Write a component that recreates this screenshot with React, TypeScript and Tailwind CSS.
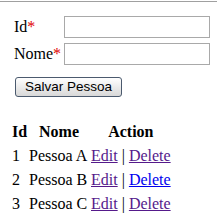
import React from 'react';

const rows = [
  { id: 1, nome: 'Pessoa A', visited: true },
  { id: 2, nome: 'Pessoa B', visited: false },
  { id: 3, nome: 'Pessoa C', visited: true },
];

const Field: React.FC<{ label: string }> = ({ label }) => (
  <>
    <div className="h-[22px] flex items-center">
      {label}
      <span className="text-[#e00000]">*</span>
    </div>
    <input type="text" className="h-[22px] w-[146px] border border-[#a9a9a9] bg-white outline-none" />
  </>
);

export default function App() {
  return (
    <div className="w-[217px] h-[221px] bg-white text-black text-[16px] leading-[18px] font-['Liberation_Serif',serif] overflow-hidden">
      <div className="mt-px h-px bg-[#a0a0a0]" />

      <div className="mt-[14px] pl-[14px] grid grid-cols-[50px_146px] gap-y-[5px]">
        <Field label="Id" />
        <Field label="Nome" />
      </div>

      <button className="mt-[12px] ml-[15px] h-[20px] w-[107px] rounded-[3px] border border-[#4b5a6e] bg-gradient-to-b from-white to-[#d8d8d8] text-[13.5px] leading-none font-['Liberation_Sans',sans-serif] text-black">
        Salvar Pessoa
      </button>

      <div className="mt-[23px] ml-[12px] w-fit grid grid-cols-[15px_60px_auto] gap-x-[2px] auto-rows-[24px] items-center">
        <div className="font-bold">Id</div>
        <div className="font-bold text-center">Nome</div>
        <div className="font-bold text-center">Action</div>
        {rows.map((r) => (
          <React.Fragment key={r.id}>
            <div>{r.id}</div>
            <div className="whitespace-nowrap">{r.nome}</div>
            <div className="whitespace-nowrap">
              <a href="#" className="underline text-[#551a8b]">Edit</a>
              {' | '}
              <a href="#" className={`underline ${r.visited ? 'text-[#551a8b]' : 'text-[#0000ee]'}`}>Delete</a>
            </div>
          </React.Fragment>
        ))}
      </div>
    </div>
  );
}
